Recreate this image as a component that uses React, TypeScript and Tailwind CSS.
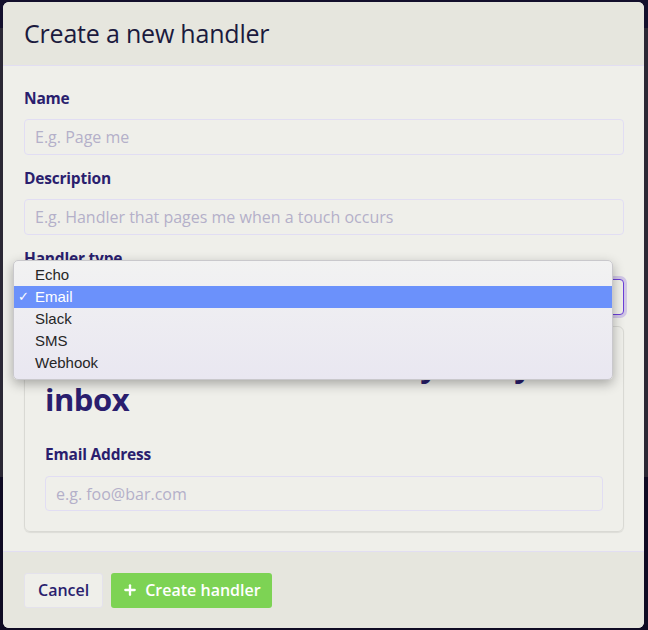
import { Plus } from "lucide-react";

const ui = { fontFamily: "'Open Sans', Lato, sans-serif" };
const mac = { fontFamily: "'Liberation Sans', Arial, sans-serif" };

const options = ["Echo", "Email", "Slack", "SMS", "Webhook"];

function Field({ label, placeholder }: { label: string; placeholder: string }) {
  return (
    <div className="flex flex-col">
      <label className="h-5 text-[15.5px] font-bold leading-5 tracking-[-0.2px] text-[#2a1e6e]">{label}</label>
      <input
        placeholder={placeholder}
        className="mt-[11px] h-9 rounded-[4px] border border-[#e1ddf3] bg-[#efefea] px-[10px] text-[16px] text-[#2a1e6e] outline-none placeholder:text-[#b4b0c9]"
        style={ui}
      />
    </div>
  );
}

export default function App() {
  return (
    <div className="relative h-[630px] w-[648px] overflow-hidden" style={ui}>
      {/* page behind the dialog */}
      <div className="flex h-full flex-col">
        <div className="h-[28px] bg-[#130f2c]" />
        <div className="h-[449px] bg-[#2b2835]" />
        <div className="flex-1 bg-[#0f0b23]" />
      </div>

      {/* dialog */}
      <div className="absolute left-[3px] top-[2px] flex w-[641px] flex-col overflow-hidden rounded-[6px] bg-[#efefea]">
        <header className="flex h-[64px] items-center border-b border-[#e2def2] bg-[#e6e6de] pl-[21px] pr-[20px]">
          <h1 className="text-[25px] leading-none tracking-[-0.2px] text-[#1b1a3d]">Create a new handler</h1>
        </header>

        <div className="relative pb-[19px] pl-[21px] pr-[20px] pt-[22px]">
          <div className="flex flex-col gap-[13px]">
            <Field label="Name" placeholder="E.g. Page me" />
            <Field label="Description" placeholder="E.g. Handler that pages me when a touch occurs" />
            <div className="flex flex-col">
              <label className="h-5 text-[15.5px] font-bold leading-5 tracking-[-0.2px] text-[#2a1e6e]">Handler type</label>
              <div className="mt-[11px] h-9 rounded-[4px] border-[1.5px] border-[#6a3fd8] bg-[#efefea] px-[10px] text-[16px] leading-[33px] text-[#2a1e6e] shadow-[0_0_0_3px_rgba(120,80,220,0.25)]">
                Email
              </div>
            </div>
          </div>

          <div className="mt-[11px] rounded-[6px] border border-[#d9d9d4] px-[20px] pb-[20px] pt-[21px] shadow-[0_1px_1px_rgba(0,0,0,0.08)]">
            <h2 className="text-[31px] font-bold leading-[34px] tracking-[-0.5px] text-[#2a1e6e]">
              <span className="whitespace-nowrap">Send notifications directly to my</span>
              <br />
              inbox
            </h2>
            <div className="mt-[28px] flex flex-col">
              <label className="h-5 text-[15.5px] font-bold leading-5 tracking-[-0.2px] text-[#2a1e6e]">Email Address</label>
              <input
                placeholder="e.g. foo@bar.com"
                className="mt-[12px] h-[35px] rounded-[4px] border border-[#e1ddf3] bg-[#efefea] px-[10px] text-[16px] outline-none placeholder:text-[#b4b0c9]"
                style={ui}
              />
            </div>
          </div>

          {/* native select popup */}
          <ul
            className="absolute left-[10px] top-[194px] w-[600px] rounded-[5px] border border-[#c9c8cc] bg-gradient-to-b from-[#f2f2f2] to-[#e9e7f1] pb-[5px] pt-[3px] shadow-[0_4px_12px_rgba(0,0,0,0.3)]"
            style={mac}
          >
            {options.map((o) => (
              <li
                key={o}
                className={
                  o === "Email"
                    ? "flex h-[22px] items-center bg-[#6b91fb] text-[15px] text-white"
                    : "flex h-[22px] items-center text-[15px] text-[#262626]"
                }
              >
                <span className="w-[21px] pl-[4px] text-[13px]">{o === "Email" ? "✓" : ""}</span>
                {o}
              </li>
            ))}
          </ul>
        </div>

        <footer className="flex h-[77px] items-center gap-2 border-t border-[#e2def2] bg-[#e6e6de] pl-[21px] pr-[20px]">
          <button className="h-[35px] rounded-[3px] border border-[#e4e2ec] bg-[#efefea] px-[13px] text-[16px] font-semibold text-[#2a1e6e]">
            Cancel
          </button>
          <button className="flex h-[35px] items-center gap-[7px] rounded-[3px] bg-[#7dd354] px-[11px] text-[16px] font-semibold text-white">
            <Plus size={16} strokeWidth={3.5} />
            Create handler
          </button>
        </footer>
      </div>
    </div>
  );
}
